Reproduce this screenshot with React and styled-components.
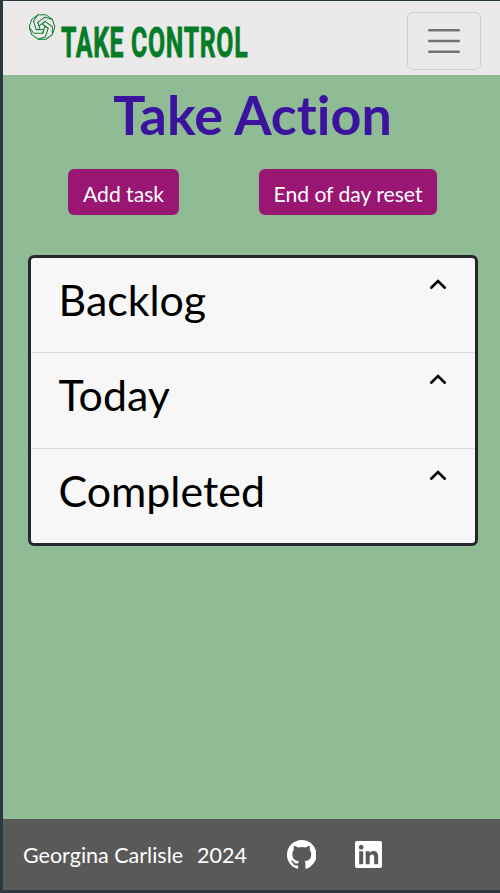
import React from "react";
import styled, { createGlobalStyle } from "styled-components";

const GlobalStyle = createGlobalStyle`
  * { box-sizing: border-box; }
  body {
    margin: 0;
    background: #2b3a40;
    font-family: Lato, sans-serif;
    font-variant-ligatures: none;
  }
  h1, h2, p { margin: 0; font-weight: 400; }
  button { font-family: inherit; font-variant-ligatures: inherit; }
`;

const Screen = styled.div`
  display: flex;
  flex-direction: column;
  width: 500px;
  height: 893px;
  border: solid #2b3a40;
  border-width: 1px 0 3px 3px;
  background: #8fbc95;
  overflow: hidden;
`;

const Navbar = styled.header`
  display: flex;
  justify-content: space-between;
  align-items: flex-start;
  height: 74px;
  flex: none;
  padding: 11px 19px 0 25px;
  background: #ebe9ea;
`;

const Brand = styled.div`
  display: flex;
  align-items: flex-start;
  color: #047c28;
`;

const BrandMark = styled.svg`
  width: 28px;
  height: 28px;
  margin-top: 1px;
`;

const BrandName = styled.span`
  width: 187px;
  margin: 9px 0 0 5px;
  font: 700 43px/42px Roboto, sans-serif;
  letter-spacing: 1.2px;
  -webkit-text-stroke: 0.8px currentColor;
  white-space: nowrap;
  transform: scaleX(0.577);
  transform-origin: 0 0;
`;

const MenuButton = styled.button`
  display: grid;
  place-items: center;
  width: 74px;
  height: 58px;
  padding: 0;
  border: 1px solid #d0cecf;
  border-radius: 6px;
  background: none;
  color: #757475;
`;

const Title = styled.h1`
  margin-top: 6px;
  padding-left: 2px;
  font-size: 53.8px;
  line-height: 66px;
  font-weight: 700;
  text-align: center;
  color: #3b139e;
`;

const Actions = styled.div`
  display: flex;
  gap: 80px;
  margin: 22px 0 40px 65px;
`;

const ActionButton = styled.button`
  width: ${(p) => p.$width}px;
  height: 46px;
  padding: 2px 0 0;
  border: 0;
  border-radius: 6px;
  background: #991773;
  color: #fff;
  font-size: 21.1px;
  white-space: nowrap;
`;

const Accordion = styled.section`
  width: 450px;
  height: 291px;
  margin-left: 25px;
  border: 3px solid #24282d;
  border-radius: 6px;
  background: #f7f7f7;
`;

const AccordionRow = styled.div`
  display: flex;
  justify-content: space-between;
  height: 95.4px;
  padding: 15px 28.5px 0 27.5px;
  color: #000;

  &:not(:last-child) {
    border-bottom: 1px solid #dcdcdc;
  }
`;

const RowTitle = styled.h2`
  font-size: 42.9px;
  line-height: 54px;
`;

const Chevron = styled.svg`
  width: 18px;
  height: 12px;
  margin: 5px 0 0;
`;

const Footer = styled.footer`
  display: flex;
  align-items: center;
  height: 71px;
  flex: none;
  margin-top: auto;
  padding: 0 20px;
  background: #595959;
  color: #fff;
  font-size: 21.5px;
`;

const Year = styled.span`
  margin: 0 40px 0 14px;
`;

const SocialIcon = styled.svg`
  width: ${(p) => p.$size}px;
  height: ${(p) => p.$size}px;
  margin-right: 39px;
  fill: currentColor;
`;

const Logo = () => (
  <BrandMark viewBox="-14 -14 28 28" fill="none" stroke="currentColor" strokeWidth="0.95">
    {[0, 72, 144, 216, 288].map((a) => (
      <g key={a} transform={`rotate(${a})`}>
        <path d="M-4 -12.2L4 -12.2L10.3 -7.6" />
        <path d="M-12.8 0L-8.3 6.3L0.8 6.3L1.6 2.6L-5.8 2.6" />
      </g>
    ))}
  </BrandMark>
);

const rows = ["Backlog", "Today", "Completed"];

export default function App() {
  return (
    <>
      <GlobalStyle />
      <Screen>
        <Navbar>
          <Brand>
            <Logo />
            <BrandName>TAKE CONTROL</BrandName>
          </Brand>
          <MenuButton aria-label="Menu">
            <svg width="34" height="28" viewBox="0 0 34 28" stroke="currentColor" strokeWidth="2.5" strokeLinecap="round">
              <path d="M2.2 3.3H31.8M2.2 14H31.8M2.2 24.7H31.8" />
            </svg>
          </MenuButton>
        </Navbar>
        <Title>Take Action</Title>
        <Actions>
          <ActionButton $width={111}>Add task</ActionButton>
          <ActionButton $width={178}>End of day reset</ActionButton>
        </Actions>
        <Accordion>
          {rows.map((r) => (
            <AccordionRow key={r}>
              <RowTitle>{r}</RowTitle>
              <Chevron viewBox="0 0 18 12" fill="none" stroke="currentColor" strokeWidth="2.6" strokeLinecap="round">
                <path d="M2.2 9.7L9 3L15.8 9.7" />
              </Chevron>
            </AccordionRow>
          ))}
        </Accordion>
        <Footer>
          <span>Georgina Carlisle</span>
          <Year>2024</Year>
          <SocialIcon $size={29.5} viewBox="0 0 16 16">
            <path d="M8 0C3.58 0 0 3.58 0 8c0 3.54 2.29 6.53 5.47 7.59.4.07.55-.17.55-.38 0-.19-.01-.82-.01-1.49-2.01.37-2.53-.49-2.69-.94-.09-.23-.48-.94-.82-1.13-.28-.15-.68-.52-.01-.53.63-.01 1.08.58 1.23.82.72 1.21 1.87.87 2.33.66.07-.52.28-.87.51-1.07-1.78-.2-3.64-.89-3.64-3.95 0-.87.31-1.59.82-2.15-.08-.2-.36-1.02.08-2.12 0 0 .67-.21 2.2.82a7.6 7.6 0 0 1 4 0c1.53-1.04 2.2-.82 2.2-.82.44 1.1.16 1.92.08 2.12.51.56.82 1.27.82 2.15 0 3.07-1.87 3.75-3.65 3.95.29.25.54.73.54 1.48 0 1.07-.01 1.93-.01 2.2 0 .21.15.46.55.38A8.01 8.01 0 0 0 16 8c0-4.42-3.58-8-8-8z" />
          </SocialIcon>
          <SocialIcon $size={27} viewBox="0 0 448 448">
            <path d="M416 0H31.9C14.3 0 0 14.5 0 32.3v383.4C0 433.5 14.3 448 31.9 448H416c17.6 0 32-14.5 32-32.3V32.3C448 14.5 433.6 0 416 0zM135.4 384H69V170.2h66.5V384h-.1zM102.2 141c-21.3 0-38.5-17.3-38.5-38.5S80.9 64 102.2 64c21.2 0 38.5 17.3 38.5 38.5 0 21.3-17.2 38.5-38.5 38.5zM384.3 384h-66.4V280c0-24.8-.5-56.7-34.5-56.7-34.6 0-39.9 27-39.9 54.9V384h-66.4V170.2h63.7v29.2h.9c8.9-16.8 30.6-34.5 62.9-34.5 67.2 0 79.7 44.3 79.7 101.9V384z" />
          </SocialIcon>
        </Footer>
      </Screen>
    </>
  );
}
